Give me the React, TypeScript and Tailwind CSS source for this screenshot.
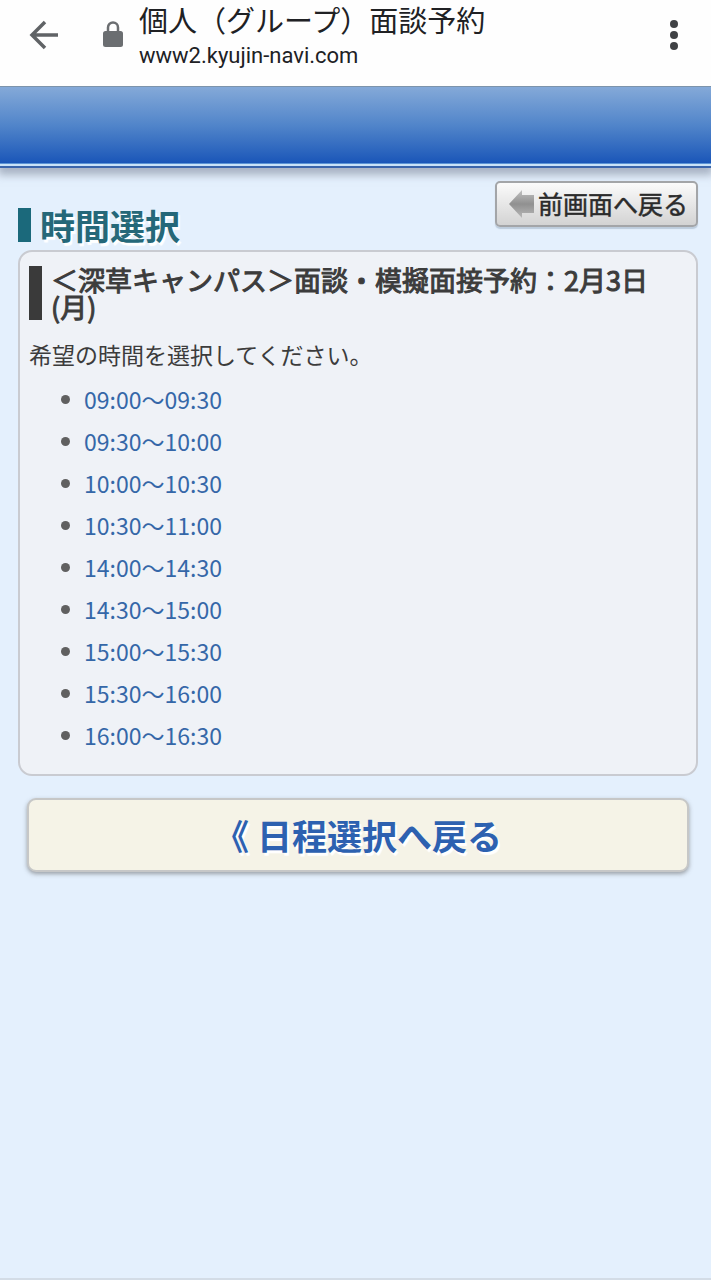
const slots = [
  '09:00～09:30',
  '09:30～10:00',
  '10:00～10:30',
  '10:30～11:00',
  '14:00～14:30',
  '14:30～15:00',
  '15:00～15:30',
  '15:30～16:00',
  '16:00～16:30',
]

function BrowserBar() {
  return (
    <header className="relative z-10 flex h-[86px] items-start bg-[#fefefe] pl-7 pr-5 text-[#202124]">
      <button aria-label="戻る" className="mt-5 shrink-0">
        <svg width="32" height="30" viewBox="0 0 32 30" fill="none" stroke="#606366" strokeWidth="3.500">
          <path d="M30 15H4M17 2L4 15l13 13" />
        </svg>
      </button>
      <svg className="ml-[43px] mt-[21px] shrink-0" width="20" height="27" viewBox="0 0 20 27">
        <rect y="10" width="20" height="16" rx="2.5" fill="#6b6e71" />
        <path d="M5 11V6.500a5 5 0 0 1 10 0V11" fill="none" stroke="#6b6e71" strokeWidth="2.500" />
      </svg>
      <div className="ml-4 min-w-0 flex-1">
        <div className="text-[29px] leading-11">個人（グループ）面談予約</div>
        <div className="text-[22px] leading-6">www2.kyujin-navi.com</div>
      </div>
      <button aria-label="メニュー" className="mt-5 shrink-0">
        <svg width="34" height="30" viewBox="0 0 34 30" fill="#3f4144">
          <circle cx="17" cy="4" r="4" />
          <circle cx="17" cy="15" r="4" />
          <circle cx="17" cy="26" r="4" />
        </svg>
      </button>
    </header>
  )
}

function Banner() {
  return (
    <div className="border-t border-[#7c93ab] shadow-[0_5px_8px_2px_rgba(110,120,140,0.5)]">
      <div className="h-[76px] bg-linear-to-b from-[#84a9d8] via-[#5185ca] to-[#1a56b8]" />
      <div className="h-px bg-[#5b94d6]" />
      <div className="h-[2px] bg-[#c9e3f8]" />
      <div className="h-[2px] bg-[#3a65ab]" />
    </div>
  )
}

export default function App() {
  return (
    <div className="flex min-h-screen flex-col border-b-2 border-[#d3dce6] bg-[#e4f0fd] font-[Roboto,'Noto_Sans_CJK_JP',sans-serif] text-[#3c3c3c]">
      <BrowserBar />
      <Banner />

      <main className="pl-[18px] pr-[13px] pt-[13px] font-['Noto_Sans_CJK_JP',sans-serif]">
        <div className="flex items-start justify-between">
          <h1 className="mt-[27px] border-l-[13px] border-[#1b697b] pl-[9px] text-[35px] font-bold leading-[34px] text-[#256879] [text-shadow:2px_3px_1px_#fff]">
            時間選択
          </h1>
          <a
            href="#back"
            className="flex h-[46px] items-center rounded-[5px] border-2 border-[#a3a5a8] bg-linear-to-b from-[#fbfbfb] to-[#d3d3d3] pl-3 pr-2 text-[25px] text-[#2b2b2b] shadow-[0_2px_1px_rgba(130,150,170,0.4)] [-webkit-text-stroke:0.5px]"
          >
            <svg className="mr-1 shrink-0" width="25" height="28" viewBox="0 0 25 28">
              <defs>
                <linearGradient id="arrow" x1="0" y1="0" x2="0" y2="1">
                  <stop offset="0" stopColor="#c2c2c2" />
                  <stop offset=".5" stopColor="#909090" />
                  <stop offset="1" stopColor="#b8b8b8" />
                </linearGradient>
              </defs>
              <path d="M0 14L13 0V5H25V23H13V28Z" fill="url(#arrow)" />
            </svg>
            前画面へ戻る
          </a>
        </div>

        <section className="mt-2 rounded-[14px] border-2 border-[#c9cbd1] bg-[#eff2f7] px-[9px] pb-[18px] pt-[14px]">
          <h2 className="border-l-[13px] border-[#3a3a3a] pl-[9px] text-[27px] font-normal leading-[27px] [-webkit-text-stroke:1px]">
            ＜深草キャンパス＞面談・模擬面接予約：2月3日(月)
          </h2>
          <p className="mt-[18px] text-[23px] leading-8">希望の時間を選択してください。</p>
          <ul className="mt-2">
            {slots.map((slot) => (
              <li key={slot} className="flex h-[42px] items-center pl-8 text-[23px]">
                <span className="mr-[14px] size-[9px] rounded-full bg-[#606060]" />
                <a href="#slot" className="text-[#3567a8]">
                  {slot}
                </a>
              </li>
            ))}
          </ul>
        </section>

        <a
          href="#dates"
          className="mx-[9px] mt-[22px] flex h-[74px] items-center justify-center whitespace-pre rounded-[9px] border-2 border-[#c6c7c7] bg-[#f5f3e7] text-[35px] font-bold text-[#2d61b0] shadow-[0_2px_4px_rgba(80,80,80,0.5)] [text-shadow:2px_3px_1px_#fff]"
        >
          《 日程選択へ戻る
        </a>
      </main>
    </div>
  )
}
